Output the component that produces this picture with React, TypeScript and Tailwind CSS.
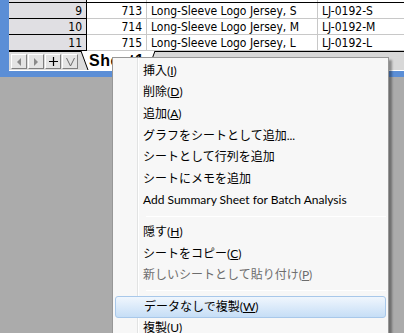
import React from 'react';

const rows = [
  { n: '9', id: '713', name: 'Long-Sleeve Logo Jersey, S', code: 'LJ-0192-S' },
  { n: '10', id: '714', name: 'Long-Sleeve Logo Jersey, M', code: 'LJ-0192-M' },
  { n: '11', id: '715', name: 'Long-Sleeve Logo Jersey, L', code: 'LJ-0192-L' },
];

type Item = { label: string; key?: string; disabled?: boolean; active?: boolean } | 'sep';

const items: Item[] = [
  { label: '挿入', key: 'I' },
  { label: '削除', key: 'D' },
  { label: '追加', key: 'A' },
  { label: 'グラフをシートとして追加...' },
  { label: 'シートとして行列を追加' },
  { label: 'シートにメモを追加' },
  { label: 'Add Summary Sheet for Batch Analysis' },
  'sep',
  { label: '隠す', key: 'H' },
  { label: 'シートをコピー', key: 'C' },
  { label: '新しいシートとして貼り付け', key: 'P', disabled: true },
  'sep',
  { label: 'データなしで複製', key: 'W', active: true },
  { label: '複製', key: 'U' },
];

function NavButton({ children }: { children: React.ReactNode }) {
  return (
    <div className="w-[16px] h-[15px] bg-[#e4e4e4] border border-t-white border-l-white border-r-[#808080] border-b-[#808080] flex items-center justify-center">
      {children}
    </div>
  );
}

export default function App() {
  return (
    <div className="relative w-[404px] h-[333px] overflow-hidden bg-[#ababab] font-['Lato','Noto_Sans_CJK_JP',sans-serif]">
      {/* worksheet window */}
      <div className="bg-[#5b8ed6] pl-[9px] pb-[6px]">
        <div className="bg-white">
          {/* grid */}
          <div className="font-['DejaVu_Sans',monospace] font-stretch-condensed text-[12px] leading-none text-black">
            <div className="flex h-[3px] border-b border-black">
              <div className="w-[78px] bg-[#e0dfe3] border-r border-black" />
              <div className="w-[60px] border-r border-[#c8c8c8]" />
              <div className="w-[171px] border-r border-[#c8c8c8]" />
              <div className="flex-1" />
            </div>
            {rows.map(r => (
              <div key={r.n} className="flex h-[16px]">
                <div className="w-[78px] bg-[#e0dfe3] border-r border-b border-black flex items-center justify-end pr-[4px]">
                  {r.n}
                </div>
                <div className="w-[60px] border-r border-b border-[#c8c8c8] flex items-center justify-end pr-[4px]">
                  {r.id}
                </div>
                <div className="w-[171px] border-r border-b border-[#c8c8c8] flex items-center pl-[4px] whitespace-nowrap">
                  {r.name}
                </div>
                <div className="flex-1 border-b border-[#c8c8c8] flex items-center pl-[4px]">{r.code}</div>
              </div>
            ))}
          </div>
          {/* sheet tab bar */}
          <div className="flex h-[19px] bg-[#dcdcdc] border-t border-black">
            <div className="flex gap-[1px] pl-[2px] pt-[2px]">
              <NavButton>
                <svg width="6" height="8" viewBox="0 0 6 8"><path d="M5 0 L1 4 L5 8 Z" fill="#8a8a8a" /></svg>
              </NavButton>
              <NavButton>
                <svg width="6" height="8" viewBox="0 0 6 8"><path d="M1 0 L5 4 L1 8 Z" fill="#8a8a8a" /></svg>
              </NavButton>
              <NavButton>
                <svg width="9" height="9" viewBox="0 0 9 9"><path d="M4.5 0 V9 M0 4.5 H9" stroke="#000" strokeWidth="1.2" /></svg>
              </NavButton>
              <NavButton>
                <svg width="9" height="8" viewBox="0 0 9 8"><path d="M0.5 0 L4.5 8 L8.5 0" stroke="#6a6a6a" strokeWidth="1" fill="none" /></svg>
              </NavButton>
            </div>
            <div className="relative ml-[2px] w-[76px] h-full -mt-[1px]">
              <svg className="absolute left-0 top-0" width="76" height="19" viewBox="0 0 76 19">
                <path d="M1 0 L8 19 L68 19 L75 0 Z" fill="#ffffff" />
                <path d="M1 0 L8 19 M68 19 L75 0" stroke="#000" strokeWidth="1" fill="none" />
              </svg>
              <span className="absolute left-[9px] top-[1px] text-[16px] font-bold leading-[18px] font-['Liberation_Sans',sans-serif] tracking-[0.5px]">
                Sheet1
              </span>
            </div>
            <div className="flex-1 bg-[#d8d8d8]" />
          </div>
          <div className="h-[1px] bg-white" />
        </div>
      </div>

      {/* context menu */}
      <div className="absolute left-[112px] top-[57px] w-[277px] h-[290px] bg-[#f7f7f7] border border-[#979797] shadow-[3px_3px_2px_rgba(0,0,0,0.35)] pt-[2px] text-[12px] text-black">
        <div className="absolute left-[24px] top-0 bottom-0 w-[1px] bg-[#e2e3e3]" />
        <div className="absolute left-[25px] top-0 bottom-0 w-[1px] bg-white" />
        {items.map((it, i) =>
          it === 'sep' ? (
            <div key={i} className="h-[10px] flex items-center pl-[33px] pr-[2px]">
              <div className="w-full h-[1px] bg-[#e0e0e0] border-b border-white" />
            </div>
          ) : (
            <div
              key={i}
              className={
                'relative mx-[2px] h-[21.6px] flex items-center pl-[28px] whitespace-nowrap ' +
                (it.active
                  ? 'rounded-[3px] border border-[#a8c8ea] bg-gradient-to-b from-[#f0f6fd] to-[#c6def6] pl-[27px]'
                  : '') +
                (it.disabled ? ' text-[#6d6d6d]' : '')
              }
            >
              <span>
                {it.label}
                {it.key && (
                  <>
                    (<span className="underline">{it.key}</span>)
                  </>
                )}
              </span>
            </div>
          )
        )}
      </div>
    </div>
  );
}
